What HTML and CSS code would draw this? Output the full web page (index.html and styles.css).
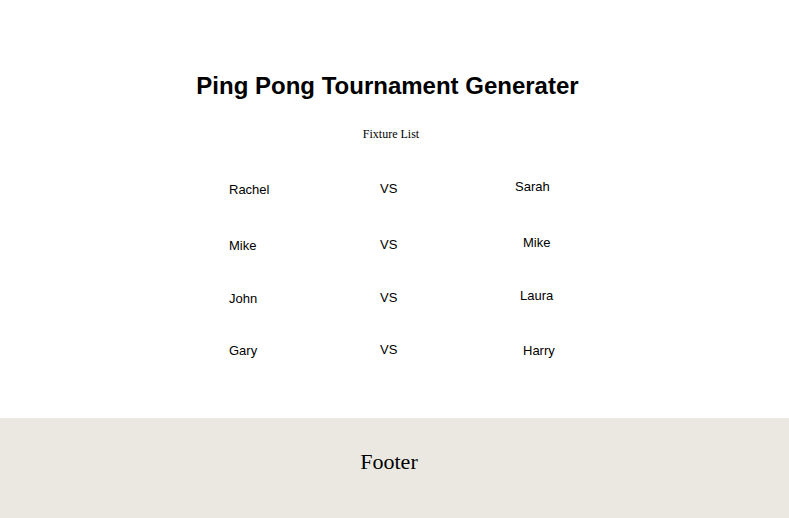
FILE: index.html
```html
<!DOCTYPE html>
<html>
<head>
<meta charset="utf-8">
<link rel="stylesheet" href="styles.css">
</head>
<body>
<main class="main">
  <h1 class="title">Ping Pong Tournament Generater</h1>
  <p class="subtitle">Fixture List</p>
  <div class="fixtures">
    <div class="row">
      <span class="p1">Rachel</span><span class="vs">VS</span><span class="p2 r1">Sarah</span>
    </div>
    <div class="row row2">
      <span class="p1">Mike</span><span class="vs">VS</span><span class="p2 r2">Mike</span>
    </div>
    <div class="row row3">
      <span class="p1">John</span><span class="vs">VS</span><span class="p2 r3">Laura</span>
    </div>
    <div class="row row4">
      <span class="p1">Gary</span><span class="vs">VS</span><span class="p2 r4">Harry</span>
    </div>
  </div>
</main>
<footer class="footer">Footer</footer>
</body>
</html>
```
FILE: styles.css
```css
html, body {
  margin: 0;
  padding: 0;
  background: #fff;
  color: #000;
}
.main {
  height: 418px;
  padding-top: 72px;
  box-sizing: border-box;
}
.title {
  margin: 0;
  font-family: "Liberation Sans", Arial, sans-serif;
  font-weight: bold;
  font-size: 24px;
  line-height: 28px;
  text-align: center;
  padding-right: 14px;
}
.subtitle {
  margin: 26px 0 0;
  font-family: "Liberation Serif", "Times New Roman", serif;
  font-size: 12px;
  line-height: 16px;
  text-align: center;
  padding-right: 7px;
}
.fixtures {
  margin-top: 39px;
  display: flex;
  flex-direction: column;
  gap: 38px;
  padding-left: 229px;
  font-family: "Liberation Sans", Arial, sans-serif;
  font-size: 13px;
  line-height: 16px;
}
.row {
  display: grid;
  grid-template-columns: 151px 135px auto;
}
.row2 { position: relative; top: 2px; }
.row3 { position: relative; top: 1px; }
.row4 { position: relative; top: -1px; }
.p1 { position: relative; top: 1px; }
.p2 { position: relative; top: -2px; }
.r1 { left: 0; }
.r2 { left: 8px; }
.r3 { left: 5px; }
.r4 { left: 8px; top: 1px; }
.footer {
  height: 100px;
  background: #ebe8e2;
  font-family: "Liberation Serif", "Times New Roman", serif;
  font-size: 22px;
  line-height: 26px;
  text-align: center;
  padding-top: 31px;
  padding-right: 11px;
  box-sizing: border-box;
}
```
